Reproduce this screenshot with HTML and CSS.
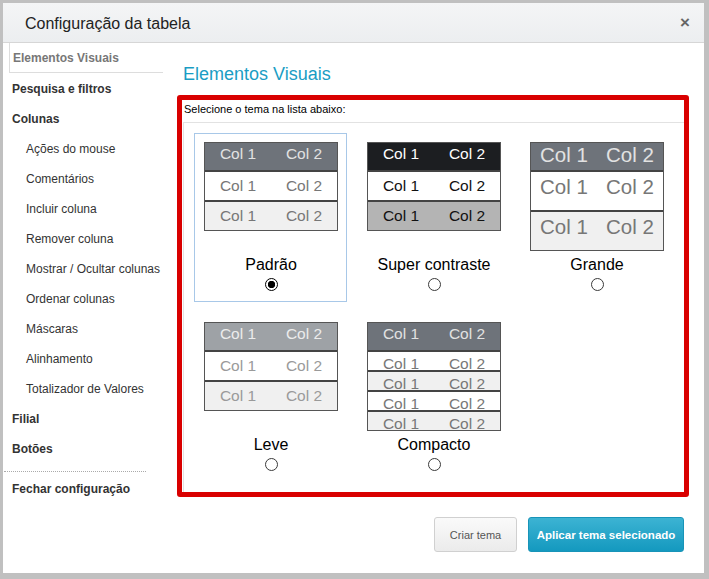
FILE: index.html
```html
<!DOCTYPE html>
<html lang="pt-BR">
<head>
    <meta charset="UTF-8">
    <title>Configuração da tabela</title>
    <link rel="stylesheet" href="styles.css">
</head>
<body>
<div class="modal">
    <div class="modal-header">
        <span class="modal-title">Configuração da tabela</span>
        <span class="modal-close">×</span>
    </div>
    <div class="modal-body">
        <ul class="menu">
            <li class="menu-item active">Elementos Visuais</li>
            <li class="menu-item">Pesquisa e filtros</li>
            <li class="menu-item">Colunas</li>
            <li class="menu-sub">Ações do mouse</li>
            <li class="menu-sub">Comentários</li>
            <li class="menu-sub">Incluir coluna</li>
            <li class="menu-sub">Remover coluna</li>
            <li class="menu-sub">Mostrar / Ocultar colunas</li>
            <li class="menu-sub">Ordenar colunas</li>
            <li class="menu-sub">Máscaras</li>
            <li class="menu-sub">Alinhamento</li>
            <li class="menu-sub">Totalizador de Valores</li>
            <li class="menu-item">Filial</li>
            <li class="menu-item">Botões</li>
            <li class="menu-sep"></li>
            <li class="menu-item">Fechar configuração</li>
        </ul>
        <div class="content">
            <h2 class="content-title">Elementos Visuais</h2>
            <div class="highlight">
                <p class="hint">Selecione o tema na lista abaixo:</p>
                <div class="themes">
                    <label class="theme selected">
                        <div class="preview">
                            <div class="tb t-padrao">
                                <div class="tb-head"><span>Col 1</span><span>Col 2</span></div>
                                <div class="tb-row"><span>Col 1</span><span>Col 2</span></div>
                                <div class="tb-row alt"><span>Col 1</span><span>Col 2</span></div>
                            </div>
                        </div>
                        <span class="theme-name">Padrão</span>
                        <input type="radio" name="tema" checked>
                    </label>
                    <label class="theme">
                        <div class="preview">
                            <div class="tb t-contraste">
                                <div class="tb-head"><span>Col 1</span><span>Col 2</span></div>
                                <div class="tb-row"><span>Col 1</span><span>Col 2</span></div>
                                <div class="tb-row alt"><span>Col 1</span><span>Col 2</span></div>
                            </div>
                        </div>
                        <span class="theme-name">Super contraste</span>
                        <input type="radio" name="tema">
                    </label>
                    <label class="theme">
                        <div class="preview">
                            <div class="tb t-grande">
                                <div class="tb-head"><span>Col 1</span><span>Col 2</span></div>
                                <div class="tb-row"><span>Col 1</span><span>Col 2</span></div>
                                <div class="tb-row alt"><span>Col 1</span><span>Col 2</span></div>
                            </div>
                        </div>
                        <span class="theme-name">Grande</span>
                        <input type="radio" name="tema">
                    </label>
                    <label class="theme">
                        <div class="preview">
                            <div class="tb t-leve">
                                <div class="tb-head"><span>Col 1</span><span>Col 2</span></div>
                                <div class="tb-row"><span>Col 1</span><span>Col 2</span></div>
                                <div class="tb-row alt"><span>Col 1</span><span>Col 2</span></div>
                            </div>
                        </div>
                        <span class="theme-name">Leve</span>
                        <input type="radio" name="tema">
                    </label>
                    <label class="theme">
                        <div class="preview">
                            <div class="tb t-compacto">
                                <div class="tb-head"><span>Col 1</span><span>Col 2</span></div>
                                <div class="tb-row"><span>Col 1</span><span>Col 2</span></div>
                                <div class="tb-row alt"><span>Col 1</span><span>Col 2</span></div>
                                <div class="tb-row"><span>Col 1</span><span>Col 2</span></div>
                                <div class="tb-row alt"><span>Col 1</span><span>Col 2</span></div>
                            </div>
                        </div>
                        <span class="theme-name">Compacto</span>
                        <input type="radio" name="tema">
                    </label>
                </div>
            </div>
            <div class="actions">
                <button class="btn">Criar tema</button>
                <button class="btn btn-primary">Aplicar tema selecionado</button>
            </div>
        </div>
    </div>
</div>
</body>
</html>
```

FILE: styles.css
```css
*{
    margin: 0;
    padding: 0;
    box-sizing: border-box;
}
body{
    background-color: #c0c0c0;
    font-family: "Liberation Sans", Arial, sans-serif;
    color: #333;
}
.modal{
    width: 701px;
    height: 570px;
    margin: 3px 0 0 3px;
    background-color: #fff;
    display: flex;
    flex-direction: column;
    box-shadow: 0 3px 0 #bdbdbd, 0 4px 0 #999;
}
.modal-header{
    height: 40px;
    display: flex;
    align-items: center;
    justify-content: space-between;
    padding: 3px 14px 0 22px;
    background: linear-gradient(#f4f5f6, #eceef0);
    border-bottom: 1px solid #d6d6d6;
}
.modal-title{
    font-size: 16px;
    color: #222;
}
.modal-close{
    font-size: 17px;
    font-weight: bold;
    color: #666;
    margin-top: -3px;
}
.modal-body{
    flex: 1;
    display: flex;
}

/* menu lateral */
.menu{
    width: 160px;
    list-style: none;
    font-size: 12px;
}
.menu li{
    height: 30px;
    line-height: 32px;
    white-space: nowrap;
}
.menu-item{
    font-weight: bold;
    padding-left: 9px;
}
.menu-sub{
    padding-left: 23px;
}
.menu .active{
    margin-left: 6px;
    padding-left: 3px;
    line-height: 31px;
    color: #777;
    border-left: 1px solid #ddd;
    border-bottom: 1px solid #ddd;
}
.menu .menu-sep{
    height: 1px;
    margin: 8px 17px 1px 1px;
    border-top: 1px dotted #aaa;
}

/* conteudo */
.content{
    flex: 1;
    padding: 19px 15px 0 14px;
}
.content-title{
    font-size: 18px;
    font-weight: normal;
    line-height: 24px;
    color: #1a9dc4;
    padding-left: 6px;
    margin-bottom: 9px;
}
.highlight{
    height: 402px;
    border: 5px solid #d90000;
    border-radius: 3px;
    display: flex;
    flex-direction: column;
}
.hint{
    height: 22px;
    padding: 3px 2px 0;
    font-size: 11px;
    line-height: 13px;
    color: #000;
}
.themes{
    flex: 1;
    margin-left: 1px;
    padding: 10px 0 0 10px;
    border-top: 1px solid #e2e2e2;
    border-left: 1px solid #e2e2e2;
    display: grid;
    grid-template-columns: repeat(3, 153px);
    grid-auto-rows: 169px;
    column-gap: 10px;
    row-gap: 11px;
    align-content: start;
}
.theme{
    display: flex;
    flex-direction: column;
    align-items: center;
    padding: 8px 8px 7px 9px;
    border: 1px solid transparent;
}
.theme.selected{
    border-color: #a8c8e8;
}
.preview{
    height: 113px;
    align-self: stretch;
}
.theme-name{
    font-size: 16px;
    line-height: 20px;
    color: #000;
}
.theme input{
    -webkit-appearance: none;
    appearance: none;
    width: 13px;
    height: 13px;
    margin: 3px 0;
    border: 1px solid #3a3a3a;
    border-radius: 50%;
    background-color: #fff;
}
.theme input:checked{
    border-color: #000;
    background: radial-gradient(circle, #000 3.4px, #fff 4px);
}

/* mini tabelas */
.tb{
    width: 134px;
    border: 1px solid #555;
    font-size: 15.5px;
    color: #777;
}
.tb-head, .tb-row{
    display: flex;
}
.tb span{
    flex: 1;
    text-align: center;
    white-space: nowrap;
}
.tb-head{
    height: 27px;
    line-height: 21px;
    background-color: #6e737a;
    color: #e2e2e2;
}
.tb-row{
    height: 30px;
    line-height: 28px;
    border-top: 2px solid #444;
    background-color: #fff;
}
.tb-row.alt{
    background-color: #f0f0f0;
}
.t-contraste{
    color: #111;
}
.t-contraste .tb-head{
    background-color: #1c1e21;
    color: #fff;
}
.t-contraste .tb-row.alt{
    background-color: #b4b4b4;
}
.t-grande{
    font-size: 20.5px;
}
.t-grande .tb-head{
    line-height: 23px;
}
.t-grande .tb-row{
    height: 40px;
    line-height: 30px;
}
.t-leve{
    color: #9a9a9a;
}
.t-leve .tb-head{
    background-color: #9ea2a6;
    color: #ececec;
}
.t-compacto .tb-row{
    height: 20px;
    line-height: 24px;
}

/* botoes */
.actions{
    display: flex;
    justify-content: flex-end;
    gap: 11px;
    margin: 20px 5px 0 0;
}
.btn{
    height: 35px;
    width: 83px;
    border: 1px solid #d0d0d0;
    border-radius: 3px;
    background: linear-gradient(#fafafa, #ebebeb);
    color: #555;
    font-family: "Liberation Sans", Arial, sans-serif;
    font-size: 11px;
}
.btn-primary{
    width: 156px;
    border-color: #1894b8;
    background: linear-gradient(#3cb3d3, #1499bf);
    color: #fff;
    font-weight: bold;
    font-size: 11.5px;
}
```
